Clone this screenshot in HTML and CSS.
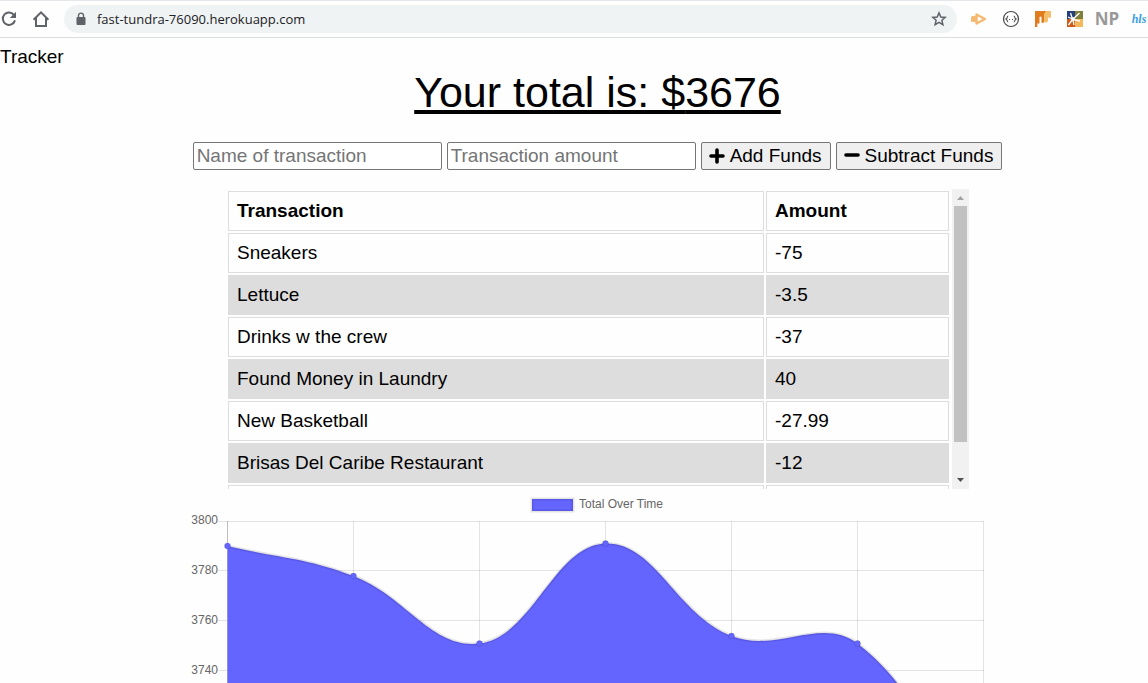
FILE: index.html
```html
<!DOCTYPE html>
<html lang="en">
<head>
<meta charset="utf-8">
<title>Budget Tracker</title>
<link rel="stylesheet" href="styles.css">
</head>
<body>
<header class="toolbar">
  <button class="nav-btn" type="button" aria-label="Reload">
    <svg width="18" height="18" viewBox="0 0 18 18"><path d="M14.2 5.2A6.2 6.2 0 1 0 15 10.4" fill="none" stroke="#5f6368" stroke-width="2"/><path d="M16 1.8V8H9.8Z" fill="#5f6368"/></svg>
  </button>
  <button class="nav-btn home" type="button" aria-label="Home">
    <svg width="18" height="18" viewBox="0 0 18 18"><path d="M1.6 9.7 9 2.3l7.4 7.4M4 8v8h10V8" fill="none" stroke="#5f6368" stroke-width="2"/></svg>
  </button>
  <div class="omnibox">
    <svg width="10" height="14" viewBox="0 0 10 14"><path d="M2.5 6V3.6a2.5 2.5 0 0 1 5 0V6" fill="none" stroke="#5f6368" stroke-width="1.4"/><rect x=".5" y="5" width="9" height="8" rx="1" fill="#5f6368"/></svg>
    <input class="url" type="text" aria-label="Address" value="fast-tundra-76090.herokuapp.com">
    <button class="star" type="button" aria-label="Bookmark">
      <svg width="16" height="16" viewBox="0 0 16 16"><path d="M8 1.9 9.8 6l4.4.4-3.3 2.9 1 4.3L8 11.3l-3.900 2.300 1-4.300-3.300-2.900L6.200 6Z" fill="none" stroke="#5f6368" stroke-width="1.5"/></svg>
    </button>
  </div>
  <div class="extensions">
    <button class="ext" type="button" aria-label="Screen recorder">
      <svg width="18" height="16" viewBox="0 0 18 16"><path d="M6.500 3.500 15 8l-8.500 4.500Z" fill="#fff" stroke="#f5b971" stroke-width="2.400" stroke-linejoin="round"/><rect x="1" y="5" width="6" height="6" rx="1.500" fill="#f5b971"/></svg>
    </button>
    <button class="ext" type="button" aria-label="JSON viewer">
      <svg width="18" height="18" viewBox="0 0 18 18"><circle cx="9" cy="9" r="7.500" fill="#fff" stroke="#4a4a4a" stroke-width="1.200"/><path d="M6.200 6C4.700 6 5.700 8.500 4 9 5.700 9.500 4.700 12 6.200 12M11.800 6c1.500 0 .5 2.500 2.200 3-1.700.5-.7 3-2.200 3" fill="none" stroke="#4a4a4a" stroke-width="1.100"/><path d="M7 9.500h1m2 0h1" stroke="#4a4a4a" stroke-width="1.200"/></svg>
    </button>
    <button class="ext" type="button" aria-label="Metrics">
      <svg width="16" height="16" viewBox="0 0 16 16"><path d="M9 0h7v5.500a1.500 1.500 0 0 1-3 0V9a2 2 0 0 1-4 1Z" fill="#f5be6a"/><path d="M0 0h11L9 3v8a1.300 1.300 0 0 1-2.500 0V6.500a1 1 0 0 0-2 0V12a1.200 1.200 0 0 1-2.200 0V16H0Z" fill="#e07b1e"/></svg>
    </button>
    <button class="ext" type="button" aria-label="Color picker">
      <svg width="16" height="16" viewBox="0 0 16 16"><path d="M0 0h8v8H0Z" fill="#233f7c"/><path d="M8 0h8v8H8Z" fill="#80803c"/><path d="M0 8h8v8H0Z" fill="#cf5a1a"/><path d="M8 8h8v8H8Z" fill="#f3b95c"/><path d="M5.500 8.500 12.500 2M5.500 8 3.500 2M5.500 8 1 6M5.500 8.500l-4 5.500M6 9l1 5M6 8.500l7 1.500" stroke="#fff" stroke-width="1.300"/><circle cx="6" cy="8" r="1.800" fill="#fff"/></svg>
    </button>
    <button class="ext np" type="button">NP</button>
    <button class="ext hls" type="button">hls</button>
  </div>
</header>

<main class="page">
  <div class="page-name">Tracker</div>
  <div class="content">
    <h1 class="total">Your total is: $<span>3676</span></h1>

    <form class="form">
      <input class="field" type="text" placeholder="Name of transaction" aria-label="Name of transaction">
      <input class="field" type="text" placeholder="Transaction amount" aria-label="Transaction amount">
      <button class="action" type="button"><svg width="16" height="16" viewBox="0 0 16 16"><path d="M8 2v12M2 8h12" stroke="#000" stroke-width="3.600" stroke-linecap="round"/></svg>Add Funds</button>
      <button class="action" type="button"><svg width="16" height="16" viewBox="0 0 16 16"><path d="M2 7h12" stroke="#000" stroke-width="3.600" stroke-linecap="round"/></svg>Subtract Funds</button>
    </form>

    <section class="transactions">
      <div class="table-view">
        <table class="table">
          <thead><tr><th class="name-col">Transaction</th><th>Amount</th></tr></thead>
          <tbody>
            <tr><td>Sneakers</td><td>-75</td></tr>
            <tr><td>Lettuce</td><td>-3.5</td></tr>
            <tr><td>Drinks w the crew</td><td>-37</td></tr>
            <tr><td>Found Money in Laundry</td><td>40</td></tr>
            <tr><td>New Basketball</td><td>-27.99</td></tr>
            <tr><td>Brisas Del Caribe Restaurant</td><td>-12</td></tr>
            <tr><td>&nbsp;</td><td>&nbsp;</td></tr>
          </tbody>
        </table>
      </div>
      <div class="scrollbar" aria-hidden="true">
        <svg width="17" height="17" viewBox="0 0 17 17"><path d="M5 11h7L8.500 7Z" fill="#a3a3a3"/></svg>
        <div class="thumb"></div>
        <svg class="down" width="17" height="17" viewBox="0 0 17 17"><path d="M5 6h7L8.500 10Z" fill="#505050"/></svg>
      </div>
    </section>

    <svg class="chart" viewBox="0 0 819 194" role="img" aria-label="Total Over Time">
      <rect x="344" y="10" width="41" height="12" fill="#6464ff"/>
      <rect x="344" y="10" width="41" height="12" fill="none" stroke="#000" stroke-opacity=".1" stroke-width="3"/>
      <text x="391" y="19">Total Over Time</text>
      <path class="grid" d="M30 32.500H796M30 81.500H796M30 131.500H796M30 181.500H796M165.500 32V194M291.500 32V194M417.500 32V194M543.500 32V194M669.500 32V194M795.500 32V194"/>
      <path class="axis" d="M39.500 32V194"/>
      <g class="ticks">
        <text x="30" y="35">3800</text>
        <text x="30" y="85">3780</text>
        <text x="30" y="135">3760</text>
        <text x="30" y="185">3740</text>
      </g>
      <path fill="#6464ff" d="M39.500 57C89.900 69 117.600 68.500 165.500 87C218.400 107.500 244.100 160.600 291.500 154.500C344.900 147.600 366.300 56 417.500 54.500C467.100 53 487.800 124.900 543.500 147C588.600 164.900 633.200 126.600 669.500 154.500C734 204.200 745.100 266.400 795.500 341H39.500Z"/>
      <path class="line" d="M39.500 57C89.900 69 117.600 68.500 165.500 87C218.400 107.500 244.100 160.600 291.500 154.500C344.900 147.600 366.300 56 417.500 54.500C467.100 53 487.800 124.900 543.500 147C588.600 164.900 633.200 126.600 669.500 154.500C734 204.200 745.100 266.400 795.500 341"/>
      <g class="points">
        <circle cx="39.500" cy="57" r="3"/><circle cx="165.500" cy="87" r="3"/><circle cx="291.500" cy="154.500" r="3"/><circle cx="417.500" cy="54.500" r="3"/><circle cx="543.500" cy="147" r="3"/><circle cx="669.500" cy="154.500" r="3"/>
      </g>
    </svg>
  </div>
</main>
</body>
</html>
```
FILE: styles.css
```css
* { box-sizing: border-box; }

body {
  margin: 0;
  background: #fefefe;
  color: #000;
  font-family: "Liberation Sans", Arial, sans-serif;
  font-size: 19px;
  line-height: 22px;
}

button { font: inherit; cursor: pointer; }

.toolbar {
  display: flex;
  align-items: center;
  height: 38px;
  border-top: 1px solid #e4e7eb;
  border-bottom: 1px solid #dadce0;
  overflow: hidden;
}

.nav-btn, .star, .ext {
  display: flex;
  align-items: center;
  justify-content: center;
  flex: none;
  padding: 0;
  border: 0;
  background: none;
}

.nav-btn { width: 18px; }
.home { width: 46px; }

.omnibox {
  display: flex;
  flex: 1;
  align-items: center;
  gap: 10px;
  height: 28px;
  padding: 0 10px 0 12px;
  border-radius: 14px;
  background: #f0f3f4;
}

.url {
  flex: 1;
  min-width: 0;
  padding: 0 0 0 1px;
  border: 0;
  outline: 0;
  background: none;
  color: #202124;
  font: 13px/20px "Open Sans", sans-serif;
}

.extensions {
  display: flex;
  flex: none;
  width: 191px;
  padding-left: 6px;
  overflow: hidden;
}

.ext { width: 32px; height: 24px; }

.np {
  color: #999;
  font: bold 17px/24px "Liberation Sans Narrow", "Open Sans", sans-serif;
}

.hls {
  color: #3c9fe0;
  font: italic bold 12px/24px "Liberation Serif", serif;
}

.page {
  padding-top: 8px;
}

.page-name { height: 22px; }

.content {
  display: flex;
  flex-direction: column;
  align-items: center;
  padding-left: 47px;
}

.total {
  margin: 0 0 25px;
  font-size: 43px;
  line-height: 49px;
  font-weight: normal;
  text-decoration: underline;
}

.form {
  display: flex;
  gap: 5px;
  margin-bottom: 19px;
}

.field, .action {
  height: 28px;
  border: 1px solid #767676;
  border-radius: 2px;
  font: inherit;
}

.field {
  width: 249px;
  padding: 0 3px;
  background: #fff;
}

.field::placeholder { color: #757575; }

.action {
  display: flex;
  align-items: center;
  gap: 5px;
  padding: 0 8px 0 7px;
  background: #efefef;
  color: #000;
  white-space: nowrap;
}

.transactions {
  display: flex;
  width: 743px;
  max-width: 100%;
  height: 300px;
}

.table-view {
  flex: 1;
  padding-right: 1px;
  overflow: hidden;
}

.table {
  width: 100%;
  border-spacing: 2px;
  table-layout: fixed;
}

.name-col { width: 536px; }

.table th, .table td {
  height: 40px;
  padding: 8px;
  border: 1px solid #ddd;
  text-align: left;
}

.table tbody tr:nth-child(even) td { background: #ddd; }

.scrollbar {
  display: flex;
  flex-direction: column;
  width: 17px;
  background: #f1f1f1;
}

.thumb {
  height: 236px;
  margin: 0 2px;
  background: #c1c1c1;
}

.down { margin-top: auto; }

.chart {
  display: block;
  width: 819px;
  max-width: 100%;
}

.chart text {
  fill: #666;
  font-size: 12px;
}

.ticks { text-anchor: end; }
.grid { fill: none; stroke: rgba(0, 0, 0, 0.1); }
.axis { stroke: rgba(0, 0, 0, 0.25); }
.line { fill: none; stroke: rgba(0, 0, 0, 0.1); stroke-width: 3px; }
.points { fill: #6464ff; stroke: rgba(0, 0, 0, 0.1); }
```
